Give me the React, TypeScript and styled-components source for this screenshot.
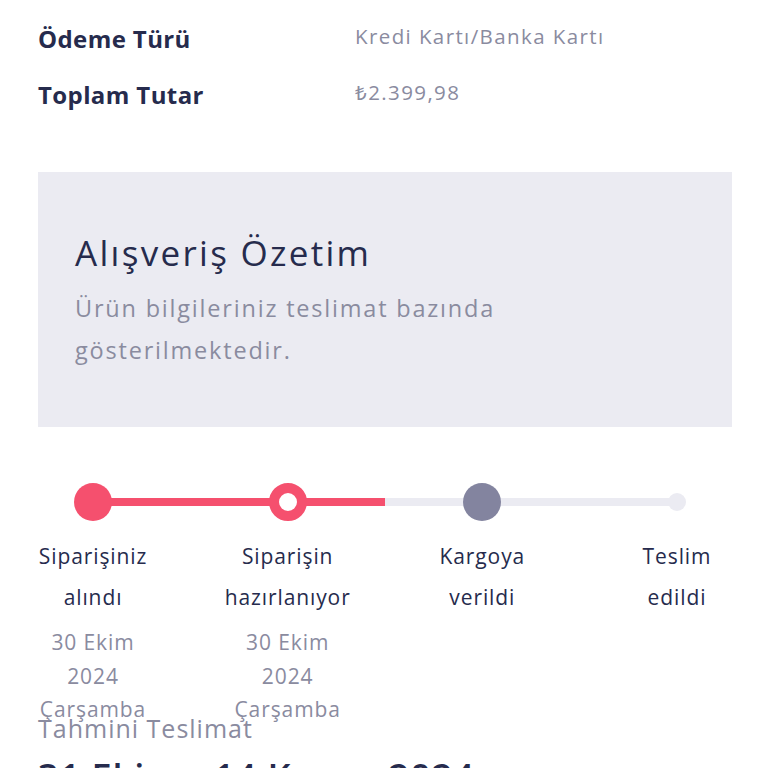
import styled, { createGlobalStyle } from "styled-components";

const GlobalStyle = createGlobalStyle`
  html, body {
    margin: 0;
    padding: 0;
    background: #ffffff;
  }
  body {
    font-family: "Open Sans", "Noto Sans", sans-serif;
    -webkit-font-smoothing: antialiased;
  }
  * {
    box-sizing: border-box;
  }
`;

const PINK = "#f5506e";
const NAVY = "#262b4d";
const MUTED = "#8a8b9f";
const TRACK = "#ebebf2";

type StepState = "done" | "current" | "next" | "last";

const steps: { title: string[]; state: StepState; date?: string[] }[] = [
  { title: ["Siparişiniz", "alındı"], state: "done", date: ["30 Ekim", "2024", "Çarşamba"] },
  { title: ["Siparişin", "hazırlanıyor"], state: "current", date: ["30 Ekim", "2024", "Çarşamba"] },
  { title: ["Kargoya", "verildi"], state: "next" },
  { title: ["Teslim", "edildi"], state: "last" },
];

const App = () => {
  return (
    <>
      <GlobalStyle />
      <Page>
        <InfoTable>
          <InfoRow>
            <InfoKey>Ödeme Türü</InfoKey>
            <InfoValue>Kredi Kartı/Banka Kartı</InfoValue>
          </InfoRow>
          <InfoRow>
            <InfoKey>Toplam Tutar</InfoKey>
            <InfoValue>₺2.399,98</InfoValue>
          </InfoRow>
        </InfoTable>

        <SummaryBox>
          <SummaryTitle>Alışveriş Özetim</SummaryTitle>
          <SummaryText>
            Ürün bilgileriniz teslimat bazında
            <br />
            gösterilmektedir.
          </SummaryText>
        </SummaryBox>

        <Tracker>
          <Track>
            <TrackFill />
          </Track>
          <StepList>
            {steps.map((step) => (
              <Step key={step.title.join(" ")}>
                <DotSlot>
                  <Dot $state={step.state} />
                </DotSlot>
                <StepTitle>
                  {step.title.map((line) => (
                    <span key={line}>{line}</span>
                  ))}
                </StepTitle>
                {step.date && (
                  <StepDate>
                    {step.date.map((line) => (
                      <span key={line}>{line}</span>
                    ))}
                  </StepDate>
                )}
              </Step>
            ))}
          </StepList>
        </Tracker>

        <Estimate>
          <EstimateLabel>Tahmini Teslimat</EstimateLabel>
          <EstimateValue>31 Ekim - 14 Kasım 2024</EstimateValue>
        </Estimate>
      </Page>
    </>
  );
};

const Page = styled.div`
  width: 768px;
  height: 768px;
  overflow: hidden;
  padding: 22px 36px 0 38px;
`;

const InfoTable = styled.div`
  display: flex;
  flex-direction: column;
  gap: 22px;
`;

const InfoRow = styled.div`
  display: grid;
  grid-template-columns: 317px 1fr;
  align-items: start;
`;

const InfoKey = styled.div`
  font-size: 24px;
  line-height: 34px;
  font-weight: 700;
  letter-spacing: 0.4px;
  color: ${NAVY};
`;

const InfoValue = styled.div`
  font-size: 20.5px;
  line-height: 28px;
  font-weight: 400;
  letter-spacing: 1.4px;
  color: ${MUTED};
`;

const SummaryBox = styled.div`
  margin-top: 60px;
  height: 255px;
  padding: 59px 37px 0 37px;
  background: ${TRACK};
`;

const SummaryTitle = styled.h2`
  margin: 0;
  font-size: 35px;
  line-height: 44px;
  font-weight: 400;
  letter-spacing: 2.3px;
  color: ${NAVY};
`;

const SummaryText = styled.p`
  margin: 12px 0 0 0;
  font-size: 23.5px;
  line-height: 42px;
  font-weight: 400;
  letter-spacing: 1.8px;
  color: ${MUTED};
`;

const Tracker = styled.div`
  position: relative;
  margin-top: 56px;
  height: 232px;
`;

const Track = styled.div`
  position: absolute;
  top: 15px;
  left: 55px;
  right: 55px;
  height: 8px;
  border-radius: 4px;
  background: ${TRACK};
`;

const TrackFill = styled.div`
  width: 50%;
  height: 100%;
  background: ${PINK};
`;

const StepList = styled.div`
  position: relative;
  display: flex;
  justify-content: space-between;
`;

const Step = styled.div`
  width: 110px;
  display: flex;
  flex-direction: column;
  align-items: center;
`;

const DotSlot = styled.div`
  height: 38px;
  display: flex;
  align-items: center;
  justify-content: center;
`;

const Dot = styled.div<{ $state: StepState }>`
  width: ${(p) => (p.$state === "last" ? "18px" : "38px")};
  height: ${(p) => (p.$state === "last" ? "18px" : "38px")};
  border-radius: 50%;
  background: ${(p) =>
    p.$state === "done"
      ? PINK
      : p.$state === "current"
      ? "#ffffff"
      : p.$state === "next"
      ? "#83849f"
      : TRACK};
  border: ${(p) => (p.$state === "current" ? `10px solid ${PINK}` : "none")};
`;

const StepTitle = styled.div`
  margin-top: 15px;
  display: flex;
  flex-direction: column;
  align-items: center;
  white-space: nowrap;
  font-size: 21px;
  line-height: 41px;
  letter-spacing: 0.9px;
  color: ${NAVY};
`;

const StepDate = styled.div`
  margin-top: 8px;
  display: flex;
  flex-direction: column;
  align-items: center;
  white-space: nowrap;
  font-size: 21px;
  line-height: 33.5px;
  letter-spacing: 0.9px;
  color: ${MUTED};
`;

const Estimate = styled.div`
  display: flex;
  flex-direction: column;
`;

const EstimateLabel = styled.div`
  font-size: 25px;
  line-height: 26px;
  letter-spacing: 1px;
  color: ${MUTED};
`;

const EstimateValue = styled.div`
  margin-top: 14px;
  font-size: 36px;
  line-height: 44px;
  font-weight: 600;
  letter-spacing: 1px;
  color: ${NAVY};
`;

export default App;
